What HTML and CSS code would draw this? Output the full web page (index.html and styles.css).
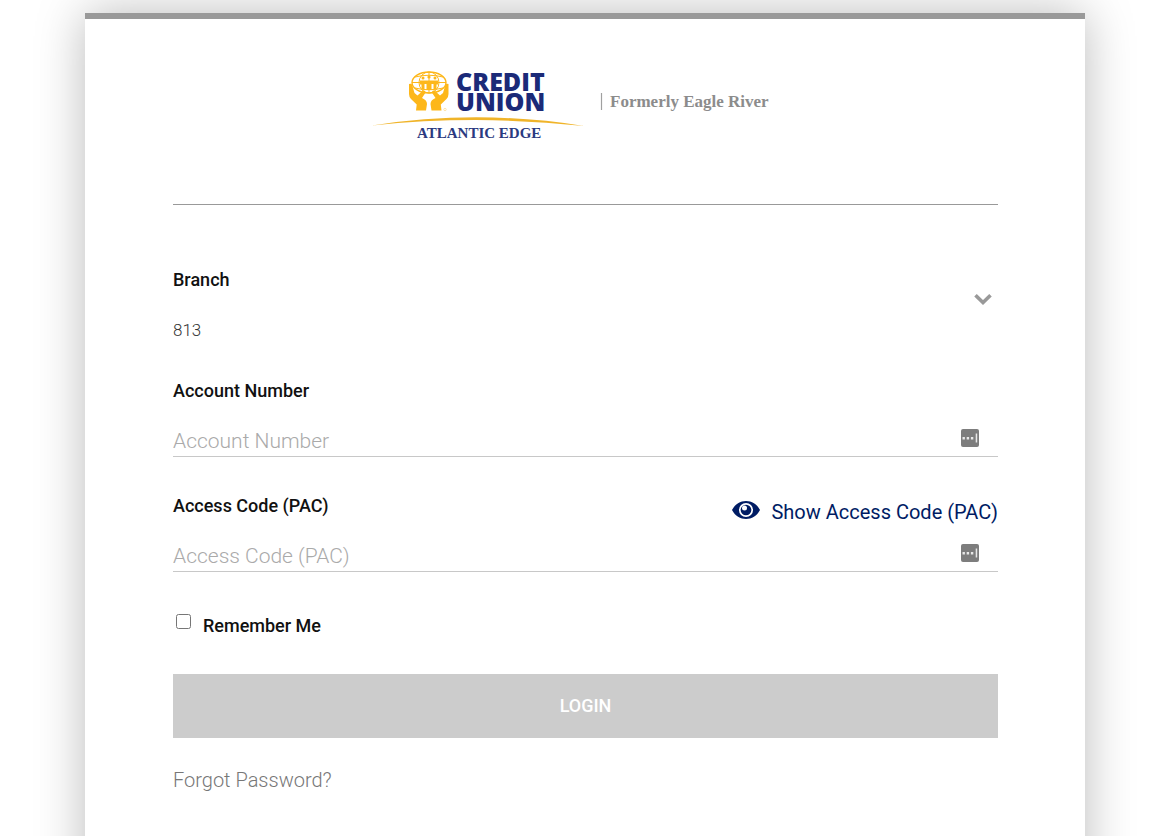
FILE: index.html
```html
<!DOCTYPE html>
<html lang="en">
<head>
<meta charset="utf-8">
<meta name="viewport" content="width=device-width, initial-scale=1">
<title>Login</title>
<link rel="stylesheet" href="styles.css">
</head>
<body class="page">
<main class="card">
  <header class="brand">
    <svg class="brand-logo" viewBox="371 60 430 90" role="img" aria-label="Credit Union Atlantic Edge, Formerly Eagle River">
      <g fill="none" stroke="#fdb71a" stroke-width="1">
        <ellipse cx="429" cy="82.500" rx="17" ry="10.500" stroke-width="1.400"/>
        <ellipse cx="429" cy="82.500" rx="10" ry="10.500"/>
        <path d="M412 82.500H446M415 77Q429 73.500 443 77M415 88Q429 91.500 443 88M429 72V93"/>
      </g>
      <g fill="#fdb71a">
        <circle cx="423" cy="78" r="1.500"/><circle cx="429" cy="77" r="1.600"/><circle cx="435" cy="78" r="1.500"/>
        <path d="M420 80.500h18v4h-1.500v4.500h-3v-5h-2v6h-5v-6h-2v5h-3v-4.500h-1.500z"/>
        <path id="hand" d="M409 84q2.500-1 3.200 1l2.300 8 3 2.500 5.500-5q3-.5 2.300 2.500l-3.300 5q5 2 5 6l-1 6.500H416l.7-6-5.700-5.500q-2-2-2-5z"/>
        <use href="#hand" transform="matrix(-1 0 0 1 857.500 0)"/>
      </g>
      <circle cx="445" cy="109.500" r="1.200" fill="none" stroke="#fdd98a" stroke-width=".7"/>
      <text class="logo-name" x="456" y="91" font-size="25">CREDIT</text>
      <text class="logo-name" x="456" y="111" font-size="25">UNION</text>
      <path d="M372 125.500Q478 109 584 126Q478 114.500 372 125.500z" fill="#f0b429"/>
      <text class="logo-region" x="417" y="138" font-size="15">ATLANTIC EDGE</text>
      <path d="M601.500 93V110" stroke="#a0a0a0" stroke-width="1.200"/>
      <text class="logo-former" x="610" y="107" font-size="17">Formerly Eagle River</text>
    </svg>
  </header>
  <form class="form">
    <div class="branch">
      <div class="branch-field">
        <label class="label" for="branch">Branch</label>
        <select class="select" id="branch"><option>813</option></select>
      </div>
      <svg class="chevron" viewBox="0 0 18 12" aria-hidden="true"><path d="M1.500 2.200L9 9.500L16.500 2.200" fill="none" stroke="#999" stroke-width="3.600"/></svg>
    </div>
    <div class="field">
      <div class="field-head"><label class="label" for="account">Account Number</label></div>
      <div class="control">
        <input class="input" id="account" type="text" placeholder="Account Number">
        <svg class="key" viewBox="0 0 18 18" aria-hidden="true"><rect width="18" height="18" rx="2" fill="#7d7d7d"/><path d="M1.500 8h2.400v2.400H1.500zM5.700 8h2.400v2.400H5.700zM9.900 8h2.400v2.400H9.900zM14.700 4.500h1.500v9h-1.500z" fill="#e8e8e8"/></svg>
      </div>
    </div>
    <div class="field">
      <div class="field-head">
        <label class="label" for="code">Access Code (PAC)</label>
        <button class="reveal" type="button">
          <svg class="eye" viewBox="0 0 28 18" aria-hidden="true"><path d="M0 9C6-3 22-3 28 9C22 21 6 21 0 9z" fill="#001c64"/><circle cx="14" cy="9" r="6.200" fill="none" stroke="#fff" stroke-width="1.700"/><circle cx="12.500" cy="7" r="2.500" fill="#fff"/></svg>
          Show Access Code (PAC)
        </button>
      </div>
      <div class="control">
        <input class="input" id="code" type="password" placeholder="Access Code (PAC)">
        <svg class="key" viewBox="0 0 18 18" aria-hidden="true"><rect width="18" height="18" rx="2" fill="#7d7d7d"/><path d="M1.500 8h2.400v2.400H1.500zM5.700 8h2.400v2.400H5.700zM9.900 8h2.400v2.400H9.900zM14.700 4.500h1.500v9h-1.500z" fill="#e8e8e8"/></svg>
      </div>
    </div>
    <div class="remember">
      <input class="check" id="remember" type="checkbox">
      <label class="label" for="remember">Remember Me</label>
    </div>
    <button class="login" type="submit">LOGIN</button>
    <a class="forgot" href="#">Forgot Password?</a>
  </form>
</main>
</body>
</html>
```
FILE: styles.css
```css
* { box-sizing: border-box; }

.page {
  margin: 0;
  padding: 13px 19px 0 16px;
  min-height: 100vh;
  display: flex;
  flex-direction: column;
  overflow: hidden;
  background: #fff;
  font-family: Roboto, sans-serif;
  color: #212121;
}

.card {
  flex: 1;
  width: 100%;
  max-width: 1000px;
  margin: 0 auto -60px;
  padding: 0 87px 100px 88px;
  border-top: 6px solid #999;
  background: #fff;
  box-shadow: 0 0 46px rgba(0, 0, 0, .27);
}

.brand {
  display: flex;
  justify-content: center;
  padding: 41px 0 54px;
  border-bottom: 1px solid #999;
}
.brand-logo { width: 430px; max-width: 100%; height: auto; }
.logo-name { font-family: "Open Sans", sans-serif; font-weight: 800; fill: #1b2a78; }
.logo-region { font-family: "Liberation Serif", serif; font-weight: 700; fill: #2b3a80; }
.logo-former { font-family: "Liberation Serif", serif; font-weight: 700; fill: #8c8c8c; }

.form { display: flex; flex-direction: column; padding-top: 63px; }

.label { font-size: 18px; font-weight: 500; line-height: 24px; color: #111; }

.branch { display: grid; }
.branch-field, .chevron { grid-area: 1 / 1; }
.branch-field { display: flex; flex-direction: column; gap: 26px; }
.select {
  appearance: none;
  width: 100%;
  height: 24px;
  padding: 0;
  border: 0;
  background: transparent;
  font: 300 17px/24px Roboto, sans-serif;
  color: #333;
}
.chevron { width: 18px; height: 12px; justify-self: end; margin: 25px 6px 0 0; pointer-events: none; }

.field { padding-top: 37px; }
.field-head {
  display: flex;
  flex-wrap: wrap;
  justify-content: space-between;
  align-items: flex-start;
  min-height: 47px;
}
.control { display: flex; align-items: center; border-bottom: 1px solid #c8c8c8; padding-right: 19px; }
.input {
  flex: 1;
  min-width: 0;
  height: 30px;
  padding: 0;
  border: 0;
  outline: 0;
  background: transparent;
  font: 300 21px/30px Roboto, sans-serif;
  color: #212121;
}
.input::placeholder { color: #aaa; opacity: 1; }
.key { width: 18px; height: 18px; margin-bottom: 6px; }

.reveal {
  display: flex;
  align-items: center;
  gap: 11px;
  padding: 0;
  border: 0;
  background: none;
  font: 400 20px/36px Roboto, sans-serif;
  color: #001c64;
}
.eye { width: 28px; height: 18px; margin-bottom: 4px; }

.remember { display: flex; align-items: flex-start; gap: 12px; margin-top: 42px; }
.check { width: 15px; height: 15px; margin: 0 0 0 3px; }

.login {
  height: 64px;
  margin-top: 36px;
  border: 0;
  background: #ccc;
  color: #fff;
  font: 500 18px/24px Roboto, sans-serif;
}

.forgot {
  align-self: flex-start;
  margin-top: 30px;
  font-size: 20px;
  font-weight: 300;
  line-height: 24px;
  color: #777;
  text-decoration: none;
}
```
